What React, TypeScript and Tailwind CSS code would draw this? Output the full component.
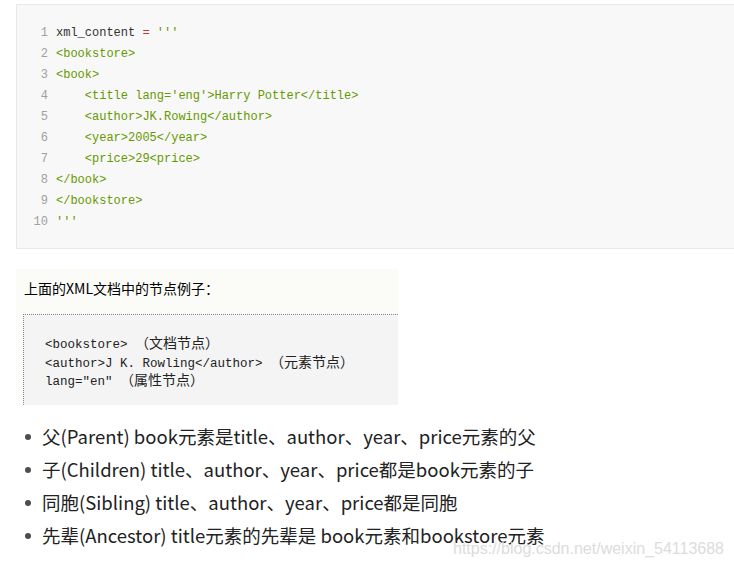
import React from "react";

const mono = { fontFamily: '"Liberation Mono", "DejaVu Sans Mono", "Noto Sans CJK SC", monospace' };

type Seg = { t: string; c: string };
const G = "text-[#669900]";
const lines: Seg[][] = [
  [
    { t: "xml_content ", c: "text-[#333333]" },
    { t: "=", c: "text-[#c0392b]" },
    { t: " '''", c: G },
  ],
  [{ t: "<bookstore>", c: G }],
  [{ t: "<book>", c: G }],
  [{ t: "    <title lang='eng'>Harry Potter</title>", c: G }],
  [{ t: "    <author>JK.Rowing</author>", c: G }],
  [{ t: "    <year>2005</year>", c: G }],
  [{ t: "    <price>29<price>", c: G }],
  [{ t: "</book>", c: G }],
  [{ t: "</bookstore>", c: G }],
  [{ t: "'''", c: G }],
];

const items = [
  "父(Parent) book元素是title、author、year、price元素的父",
  "子(Children) title、author、year、price都是book元素的子",
  "同胞(Sibling) title、author、year、price都是同胞",
  "先辈(Ancestor) title元素的先辈是 book元素和bookstore元素",
];

const cjk = { fontFamily: '"Noto Sans CJK SC", sans-serif' };

const preLines: [string, string][] = [
  ["<bookstore> ", "（文档节点）"],
  ["<author>J K. Rowling</author> ", "（元素节点）"],
  ["lang=\"en\" ", "（属性节点）"],
];

export default function App() {
  return (
    <div className="relative w-[734px] h-[568px] overflow-hidden bg-white">
      <div className="pt-[4px] pl-[16px]">
        <div className="w-[720px] border border-[#e8e8e8] bg-[#f8f8f8] pt-[18px] pb-[15px]" style={mono}>
          {lines.map((l, i) => (
            <div key={i} className="flex h-[21px] items-center text-[12px] leading-[21px] whitespace-pre">
              <span className="w-[31px] text-right text-[#a0a0a0]">{i + 1}</span>
              <span className="pl-[8px]">
                {l.map((s, j) => (
                  <span key={j} className={s.c}>{s.t}</span>
                ))}
              </span>
            </div>
          ))}
        </div>
      </div>

      <div className="mt-[20px] ml-[16px] w-[382px] h-[136px] bg-[#fbfbf7] flex flex-col">
        <div
          className="pl-[8px] pt-[10px] h-[45px] text-[14px] leading-[19px] text-black"
          style={{ fontFamily: '"Noto Sans CJK SC", "Noto Sans", sans-serif' }}
        >
          上面的XML文档中的节点例子：
        </div>
        <div
          className="ml-[7px] flex-1 border-t border-l border-dotted border-[#8a8a8a] bg-[#f4f4f4] pt-[18px] pl-[21px] text-[12.5px] text-[#222] whitespace-pre"
          style={mono}
        >
          {preLines.map(([a, b], i) => (
            <div key={i} className="flex items-baseline h-[18.5px]">
              <span className="leading-[18px]">{a}</span>
              <span className="text-[14px] leading-[18px]" style={cjk}>{b}</span>
            </div>
          ))}
        </div>
      </div>

      <ul
        className="mt-[15px] pl-[24px] text-[18.5px] text-[#222]"
        style={{ fontFamily: '"Noto Sans CJK SC", "Noto Sans", sans-serif' }}
      >
        {items.map((t, i) => (
          <li key={i} className="flex items-center h-[33px] leading-[33px]">
            <span className="w-[6px] h-[6px] rounded-full bg-[#4d4d4d] mr-[11px] ml-[1px]" />
            <span>{t}</span>
          </li>
        ))}
      </ul>

      <div
        className="absolute left-[453px] top-[538px] text-[16px] leading-[22px] text-[#dcdcdc]"
        style={{ fontFamily: '"Liberation Sans", Arial, sans-serif' }}
      >
        https://blog.csdn.net/weixin_54113688
      </div>
    </div>
  );
}
